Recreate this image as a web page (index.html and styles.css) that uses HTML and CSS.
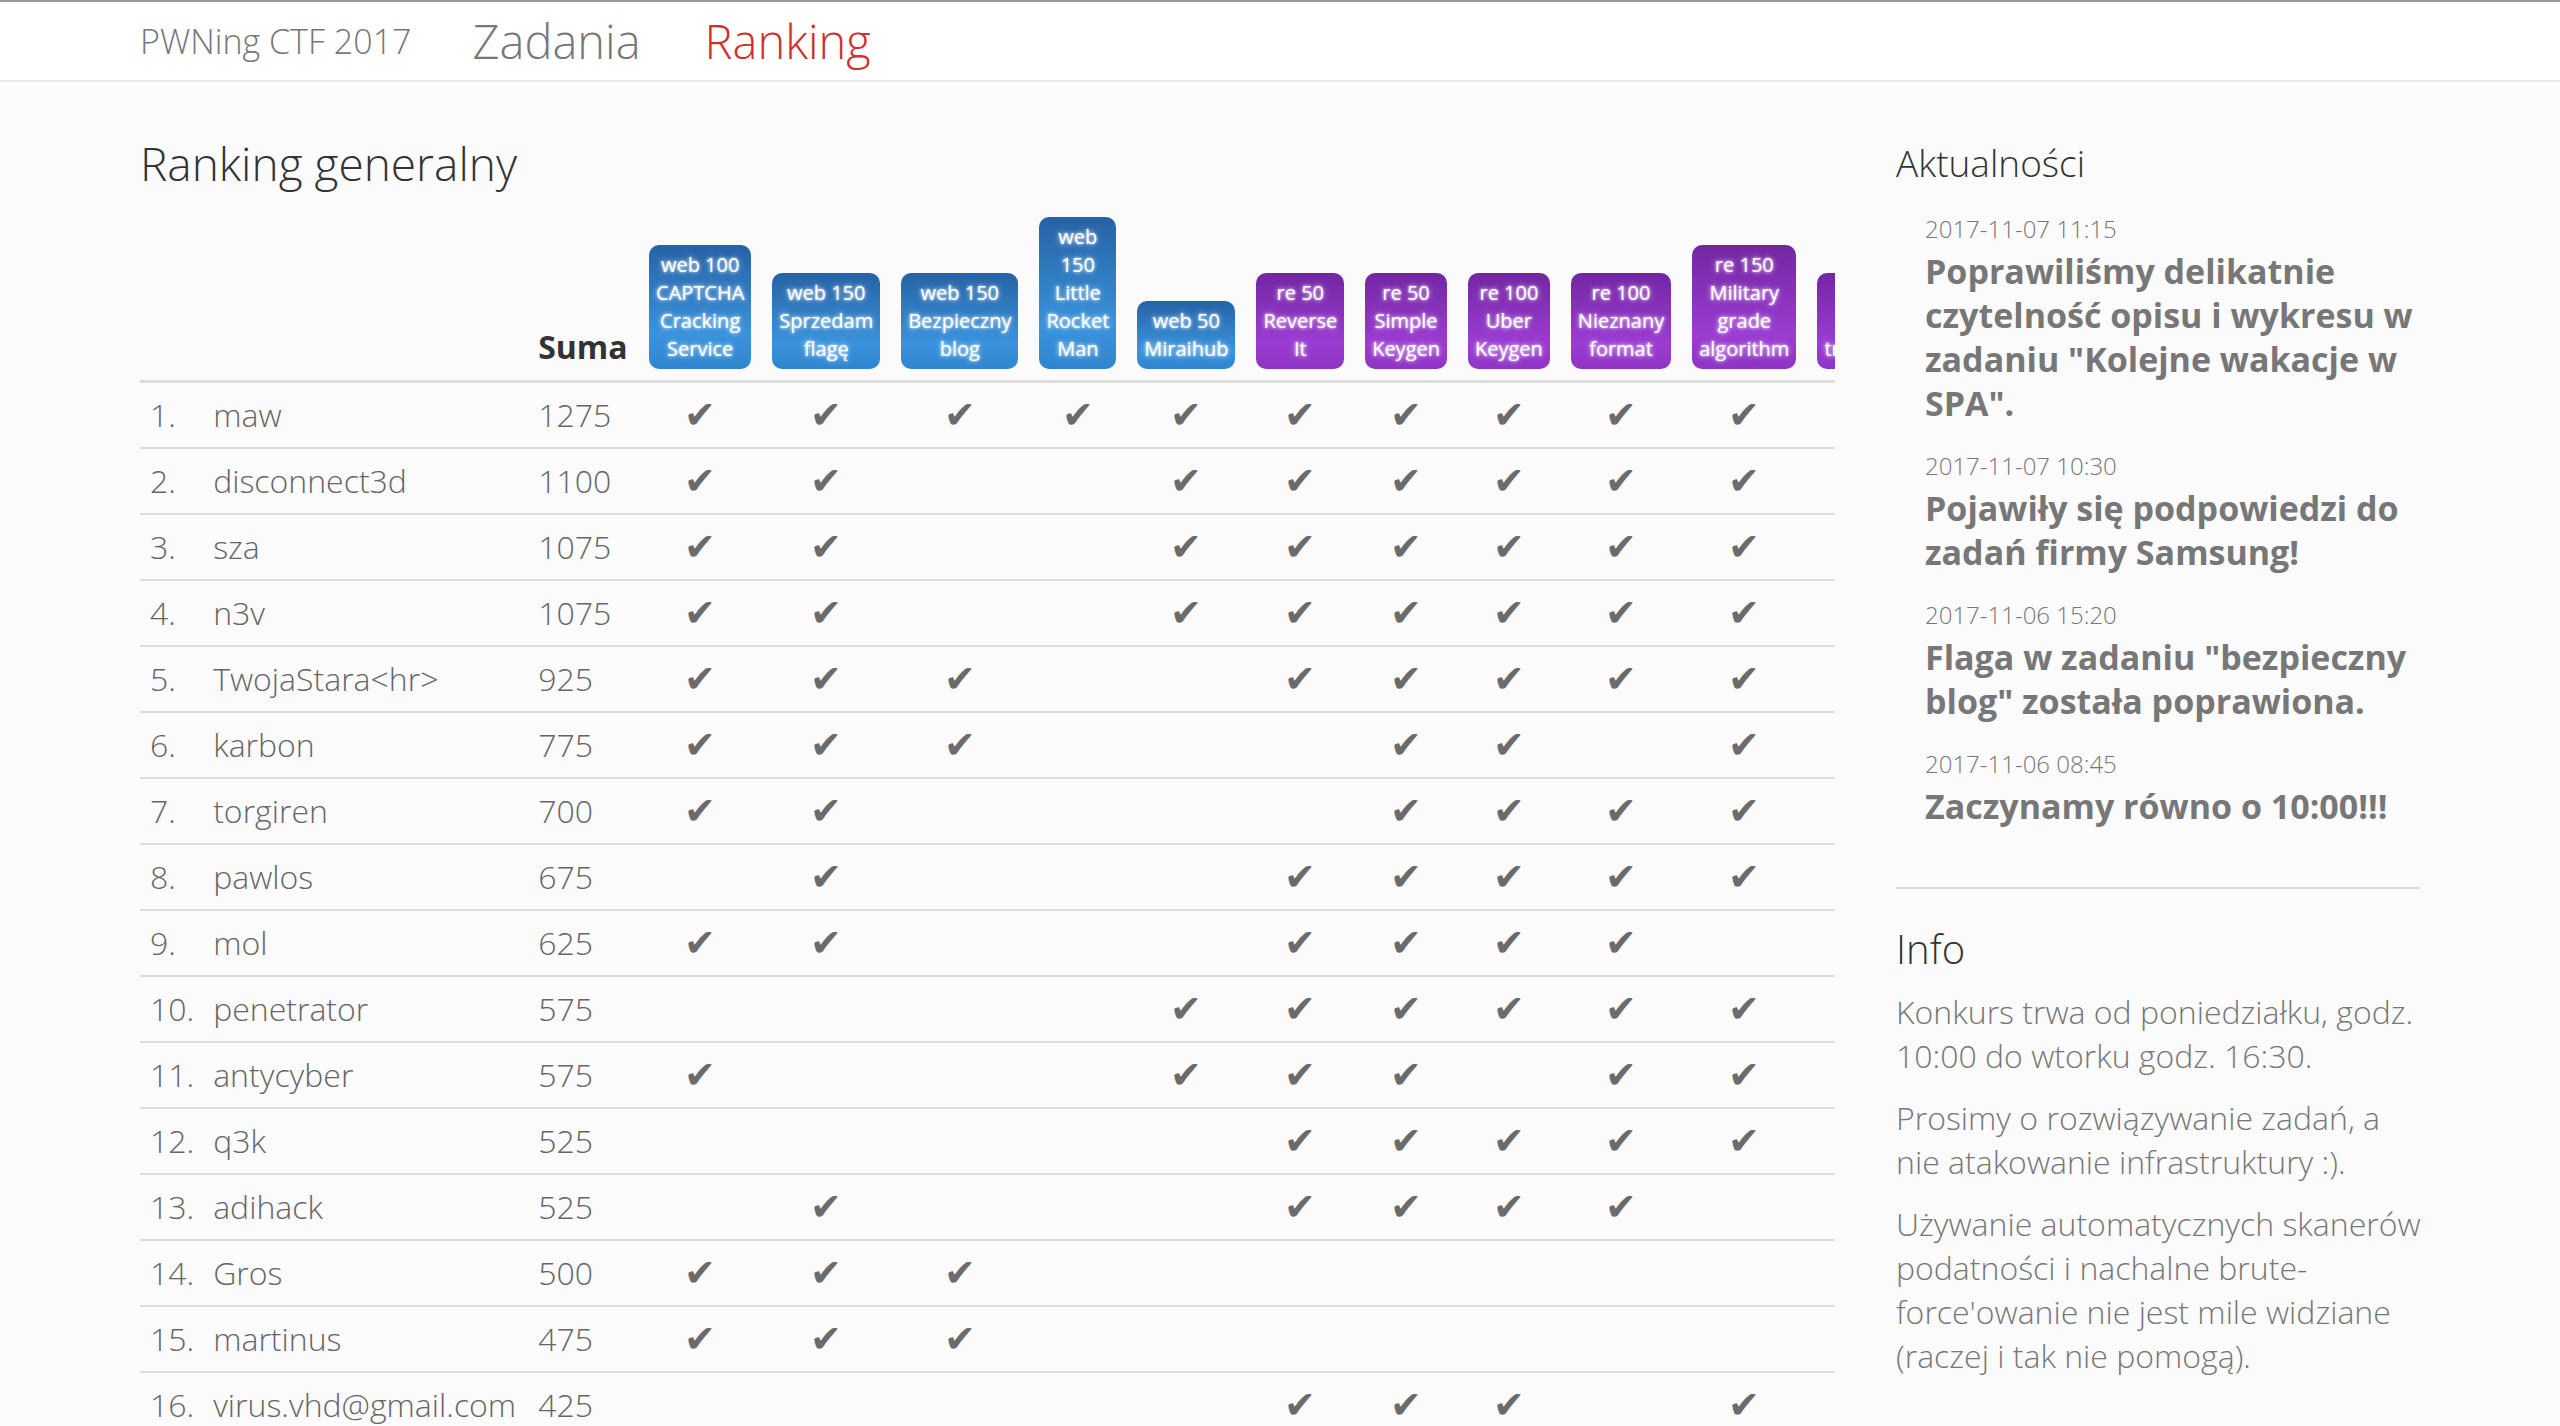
FILE: index.html
```html
<!DOCTYPE html>
<html lang="pl">
<head>
<meta charset="utf-8">
<title>PWNing CTF 2017 - Ranking</title>
<link rel="stylesheet" href="styles.css">
</head>
<body>
<header class="topbar">
  <div class="container nav-inner">
    <a class="brand" href="#">PWNing CTF 2017</a>
    <a class="nav-link" href="#">Zadania</a>
    <a class="nav-link active" href="#">Ranking</a>
  </div>
</header>

<div class="container main">
  <section class="left">
    <h2 class="title">Ranking generalny</h2>
    <div class="table-wrap">
      <table class="ranking">
        <thead>
          <tr>
            <th class="pos"></th>
            <th></th>
            <th class="sum-h">Suma</th>
            <th class="task"><span class="badge web">web 100 CAPTCHA Cracking Service</span></th>
            <th class="task"><span class="badge web">web 150 Sprzedam flagę</span></th>
            <th class="task"><span class="badge web">web 150 Bezpieczny blog</span></th>
            <th class="task"><span class="badge web">web 150 Little Rocket Man</span></th>
            <th class="task"><span class="badge web">web 50 Miraihub</span></th>
            <th class="task"><span class="badge re">re 50 Reverse It</span></th>
            <th class="task"><span class="badge re">re 50 Simple Keygen</span></th>
            <th class="task"><span class="badge re">re 100 Uber Keygen</span></th>
            <th class="task"><span class="badge re">re 100 Nieznany format</span></th>
            <th class="task"><span class="badge re">re 150 Military grade algorithm</span></th>
            <th class="task"><span class="badge re">re 200 Nano transformer</span></th>
            <th class="task"><span class="badge re">re 200 Final boss</span></th>
          </tr>
        </thead>
        <tbody>
          <tr><td class="pos">1.</td><td class="name">maw</td><td class="sum">1275</td><td class="c">✔</td><td class="c">✔</td><td class="c">✔</td><td class="c">✔</td><td class="c">✔</td><td class="c">✔</td><td class="c">✔</td><td class="c">✔</td><td class="c">✔</td><td class="c">✔</td><td class="c"></td><td class="c"></td></tr>
          <tr><td class="pos">2.</td><td class="name">disconnect3d</td><td class="sum">1100</td><td class="c">✔</td><td class="c">✔</td><td class="c"></td><td class="c"></td><td class="c">✔</td><td class="c">✔</td><td class="c">✔</td><td class="c">✔</td><td class="c">✔</td><td class="c">✔</td><td class="c"></td><td class="c"></td></tr>
          <tr><td class="pos">3.</td><td class="name">sza</td><td class="sum">1075</td><td class="c">✔</td><td class="c">✔</td><td class="c"></td><td class="c"></td><td class="c">✔</td><td class="c">✔</td><td class="c">✔</td><td class="c">✔</td><td class="c">✔</td><td class="c">✔</td><td class="c"></td><td class="c"></td></tr>
          <tr><td class="pos">4.</td><td class="name">n3v</td><td class="sum">1075</td><td class="c">✔</td><td class="c">✔</td><td class="c"></td><td class="c"></td><td class="c">✔</td><td class="c">✔</td><td class="c">✔</td><td class="c">✔</td><td class="c">✔</td><td class="c">✔</td><td class="c"></td><td class="c"></td></tr>
          <tr><td class="pos">5.</td><td class="name">TwojaStara&lt;hr&gt;</td><td class="sum">925</td><td class="c">✔</td><td class="c">✔</td><td class="c">✔</td><td class="c"></td><td class="c"></td><td class="c">✔</td><td class="c">✔</td><td class="c">✔</td><td class="c">✔</td><td class="c">✔</td><td class="c"></td><td class="c"></td></tr>
          <tr><td class="pos">6.</td><td class="name">karbon</td><td class="sum">775</td><td class="c">✔</td><td class="c">✔</td><td class="c">✔</td><td class="c"></td><td class="c"></td><td class="c"></td><td class="c">✔</td><td class="c">✔</td><td class="c"></td><td class="c">✔</td><td class="c"></td><td class="c"></td></tr>
          <tr><td class="pos">7.</td><td class="name">torgiren</td><td class="sum">700</td><td class="c">✔</td><td class="c">✔</td><td class="c"></td><td class="c"></td><td class="c"></td><td class="c"></td><td class="c">✔</td><td class="c">✔</td><td class="c">✔</td><td class="c">✔</td><td class="c"></td><td class="c"></td></tr>
          <tr><td class="pos">8.</td><td class="name">pawlos</td><td class="sum">675</td><td class="c"></td><td class="c">✔</td><td class="c"></td><td class="c"></td><td class="c"></td><td class="c">✔</td><td class="c">✔</td><td class="c">✔</td><td class="c">✔</td><td class="c">✔</td><td class="c"></td><td class="c"></td></tr>
          <tr><td class="pos">9.</td><td class="name">mol</td><td class="sum">625</td><td class="c">✔</td><td class="c">✔</td><td class="c"></td><td class="c"></td><td class="c"></td><td class="c">✔</td><td class="c">✔</td><td class="c">✔</td><td class="c">✔</td><td class="c"></td><td class="c"></td><td class="c"></td></tr>
          <tr><td class="pos">10.</td><td class="name">penetrator</td><td class="sum">575</td><td class="c"></td><td class="c"></td><td class="c"></td><td class="c"></td><td class="c">✔</td><td class="c">✔</td><td class="c">✔</td><td class="c">✔</td><td class="c">✔</td><td class="c">✔</td><td class="c"></td><td class="c"></td></tr>
          <tr><td class="pos">11.</td><td class="name">antycyber</td><td class="sum">575</td><td class="c">✔</td><td class="c"></td><td class="c"></td><td class="c"></td><td class="c">✔</td><td class="c">✔</td><td class="c">✔</td><td class="c"></td><td class="c">✔</td><td class="c">✔</td><td class="c"></td><td class="c"></td></tr>
          <tr><td class="pos">12.</td><td class="name">q3k</td><td class="sum">525</td><td class="c"></td><td class="c"></td><td class="c"></td><td class="c"></td><td class="c"></td><td class="c">✔</td><td class="c">✔</td><td class="c">✔</td><td class="c">✔</td><td class="c">✔</td><td class="c"></td><td class="c"></td></tr>
          <tr><td class="pos">13.</td><td class="name">adihack</td><td class="sum">525</td><td class="c"></td><td class="c">✔</td><td class="c"></td><td class="c"></td><td class="c"></td><td class="c">✔</td><td class="c">✔</td><td class="c">✔</td><td class="c">✔</td><td class="c"></td><td class="c"></td><td class="c"></td></tr>
          <tr><td class="pos">14.</td><td class="name">Gros</td><td class="sum">500</td><td class="c">✔</td><td class="c">✔</td><td class="c">✔</td><td class="c"></td><td class="c"></td><td class="c"></td><td class="c"></td><td class="c"></td><td class="c"></td><td class="c"></td><td class="c"></td><td class="c"></td></tr>
          <tr><td class="pos">15.</td><td class="name">martinus</td><td class="sum">475</td><td class="c">✔</td><td class="c">✔</td><td class="c">✔</td><td class="c"></td><td class="c"></td><td class="c"></td><td class="c"></td><td class="c"></td><td class="c"></td><td class="c"></td><td class="c"></td><td class="c"></td></tr>
          <tr><td class="pos">16.</td><td class="name">virus.vhd@gmail.com</td><td class="sum">425</td><td class="c"></td><td class="c"></td><td class="c"></td><td class="c"></td><td class="c"></td><td class="c">✔</td><td class="c">✔</td><td class="c">✔</td><td class="c"></td><td class="c">✔</td><td class="c"></td><td class="c"></td></tr>
        </tbody>
      </table>
    </div>
  </section>

  <aside class="right">
    <h3 class="side-title">Aktualności</h3>
    <ul class="news">
      <li><span class="date">2017-11-07 11:15</span><div class="msg">Poprawiliśmy delikatnie czytelność opisu i wykresu w zadaniu "Kolejne wakacje w SPA".</div></li>
      <li><span class="date">2017-11-07 10:30</span><div class="msg">Pojawiły się podpowiedzi do zadań firmy Samsung!</div></li>
      <li><span class="date">2017-11-06 15:20</span><div class="msg">Flaga w zadaniu "bezpieczny blog" została poprawiona.</div></li>
      <li><span class="date">2017-11-06 08:45</span><div class="msg">Zaczynamy równo o 10:00!!!</div></li>
    </ul>
    <hr class="sep">
    <h3 class="side-title info-title">Info</h3>
    <div class="info">
      <p>Konkurs trwa od poniedziałku, godz. 10:00 do wtorku godz. 16:30.</p>
      <p>Prosimy o rozwiązywanie zadań, a nie atakowanie infrastruktury :).</p>
      <p>Używanie automatycznych skanerów podatności i nachalne brute-force'owanie nie jest mile widziane (raczej i tak nie pomogą).</p>
    </div>
  </aside>
</div>
</body>
</html>
```
FILE: styles.css
```css
* { box-sizing: border-box; }

body {
  margin: 0;
  background: #fbfbfb;
  font-family: "Open Sans", "DejaVu Sans", sans-serif;
  font-weight: 300;
  color: #666;
}

.container {
  width: 2280px;
  margin: 0 auto;
}

/* top navigation */
.topbar {
  background: #fff;
  border-top: 2px solid #9a9a9a;
  border-bottom: 2px solid #e9e9e9;
}

.nav-inner {
  display: flex;
  align-items: center;
  height: 78px;
}

.brand {
  font-size: 34px;
  color: #777;
  text-decoration: none;
  margin-right: 29px;
}

.nav-link {
  font-size: 47px;
  color: #777;
  text-decoration: none;
  padding: 0 32px;
}

.nav-link.active {
  color: #d0302c;
}

/* main layout */
.main {
  display: grid;
  grid-template-columns: 1695px 524px;
  column-gap: 61px;
  padding-top: 56px;
}

.title {
  margin: 0 0 18px;
  font-size: 46px;
  line-height: 50px;
  font-weight: 300;
  color: #333;
}

.table-wrap {
  overflow: hidden;
}

.ranking {
  border-collapse: collapse;
  font-size: 32px;
  line-height: 44px;
  color: #666;
}

.ranking th {
  padding: 11px;
  vertical-align: bottom;
  text-align: left;
  border-bottom: 3px solid #ddd;
  white-space: nowrap;
}

.ranking td {
  padding: 10px 11px;
  border-bottom: 2px solid #ddd;
  white-space: nowrap;
}

.ranking .pos {
  padding-left: 10px;
  padding-right: 8px;
}

.sum-h {
  font-weight: 700;
  color: #333;
}

.ranking th.task {
  text-align: center;
  white-space: normal;
  padding-left: 10.5px;
  padding-right: 10.5px;
}

.badge {
  display: inline-block;
  width: min-content;
  padding: 6px 7px;
  border-radius: 10px;
  color: #fff;
  font-size: 20px;
  line-height: 28px;
  font-weight: 400;
  text-align: center;
  vertical-align: bottom;
  text-shadow: 0 0 3px rgba(255, 255, 255, 0.9), 0 0 6px rgba(255, 255, 255, 0.6);
}

.badge.web {
  background: linear-gradient(#2662a5 0%, #3a93dc 72%, #2f86cf 100%);
}

.badge.re {
  background: linear-gradient(#7227a2 0%, #9b3cd2 72%, #8e35c4 100%);
}

.ranking td.c {
  text-align: center;
  padding-left: 10.5px;
  padding-right: 10.5px;
  font-family: "DejaVu Sans", sans-serif;
  font-size: 38px;
  color: #6b6b6b;
}

/* right column */
.side-title {
  margin: 4px 0 25px;
  font-size: 37px;
  line-height: 42px;
  font-weight: 300;
  color: #333;
}

.news {
  list-style: none;
  margin: 0;
  padding: 0 0 0 29px;
}

.news li {
  margin-bottom: 21px;
}

.news li:last-child {
  margin-bottom: 0;
}

.date {
  display: block;
  font-size: 24px;
  line-height: 40px;
  color: #777;
}

.msg {
  font-size: 34px;
  line-height: 44px;
  font-weight: 700;
  color: #777;
}

.sep {
  border: 0;
  border-top: 2px solid #ddd;
  margin: 59px 0 39px;
}

.info-title {
  margin: 0 0 20px;
  font-size: 40px;
}

.info {
  margin-right: -6px;
}

.info p {
  margin: 0 0 18px;
  font-size: 32px;
  line-height: 44px;
  color: #777;
}
```
